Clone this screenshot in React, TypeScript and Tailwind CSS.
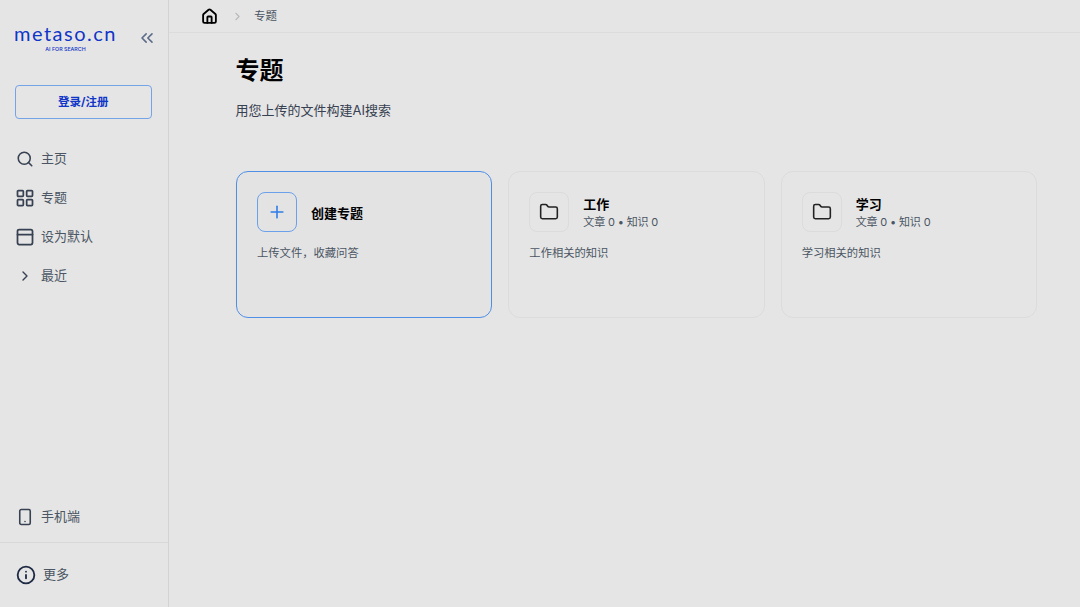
import { ChevronRight, ChevronsLeft, Folder, House, Info, LayoutGrid, PanelTop, Plus, Search, Smartphone } from "lucide-react";

const font = { fontFamily: '"Inter", "Noto Sans CJK SC", sans-serif' };

const navItems = [
  { label: "主页", icon: <Search size={18} strokeWidth={2.1} /> },
  { label: "专题", icon: <LayoutGrid size={20} strokeWidth={2.1} /> },
  { label: "设为默认", icon: <PanelTop size={20} strokeWidth={2.1} /> },
  { label: "最近", icon: <ChevronRight size={16} strokeWidth={2.1} /> },
];

function TopicCard({ title, desc }: { title: string; desc: string }) {
  return (
    <div className="h-[147px] rounded-xl border border-[#dcdcdc] px-5 pt-5">
      <div className="flex items-center gap-[14px]">
        <div className="flex size-10 items-center justify-center rounded-lg border border-[#dcdcdc] text-[#222]">
          <Folder size={20} strokeWidth={1.9} />
        </div>
        <div className="pt-[3px]">
          <div className="text-[13px] leading-[18px] font-bold text-black">{title}</div>
          <div className="text-[11px] leading-[19px] tracking-[-0.15px] text-[#4b5563]">文章 0 • 知识 0</div>
        </div>
      </div>
      <p className="mt-[13px] text-[11.3px] leading-4 text-[#4b5563]">{desc}</p>
    </div>
  );
}

export default function App() {
  return (
    <div className="flex h-[607px] w-[1080px] overflow-hidden bg-[#e5e5e5]" style={font}>
      <aside className="flex w-[169px] shrink-0 flex-col border-r border-[#d3d3d6]">
        <div className="flex items-start justify-between pt-[21px] pr-[11px] pl-[14px]">
          <div className="w-[103px] text-[#1035c8]">
            <div className="text-[20px] leading-[24px] font-normal tracking-[1.5px] whitespace-nowrap" style={{ fontFamily: '"Lato", sans-serif' }}>metaso.cn</div>
            <div className="text-center text-[5.3px] leading-[8px] font-medium">AI FOR SEARCH</div>
          </div>
          <ChevronsLeft size={20} strokeWidth={1.9} className="mt-[7px] text-[#5d6b8a]" />
        </div>
        <button type="button" className="mt-8 mr-4 ml-[14.5px] h-[34px] rounded border border-[#74a3e8] pt-0.5 text-[11.5px] font-bold text-[#1035c8]">
          登录/注册
        </button>
        <nav className="mt-5 flex flex-col">
          {navItems.map((item) => (
            <div key={item.label} className="flex h-[39px] items-center text-[13px] text-[#4b5563]">
              <span className="flex w-[41px] justify-center pl-[9px] text-[#374151]">{item.icon}</span>
              {item.label}
            </div>
          ))}
        </nav>
        <div className="mt-auto flex h-[50px] items-center text-[13px] text-[#4b5563]">
          <span className="flex w-[41px] justify-center pl-[9px] text-[#374151]">
            <Smartphone size={18} strokeWidth={2.1} />
          </span>
          手机端
        </div>
        <div className="flex h-[65px] items-center border-t border-[#d8d8da] text-[13px] text-[#4b5563]">
          <span className="flex w-[43px] justify-center pl-[9px] text-[#1f2a44]">
            <Info size={20} strokeWidth={2.2} />
          </span>
          更多
        </div>
      </aside>
      <main className="flex-1">
        <header className="flex h-[33px] items-center border-b border-[#dcdcdc] pl-8">
          <House size={17} strokeWidth={2.6} className="text-black" />
          <ChevronRight size={13} className="ml-[13px] text-[#b9b9bd]" />
          <span className="mt-px ml-[10px] text-[11.5px] text-[#4b5563]">专题</span>
        </header>
        <div className="pr-[43px] pl-[67px]">
          <h1 className="mt-[22px] -ml-[0.5px] text-2xl leading-8 font-bold text-black">专题</h1>
          <p className="mt-[14px] -ml-[0.5px] text-[13px] leading-[18px] text-[#374151]">用您上传的文件构建AI搜索</p>
          <div className="mt-[52px] grid grid-cols-3 gap-4">
            <div className="h-[147px] rounded-xl border border-[#4f8fe6] bg-[#e3e3e4] px-5 pt-5">
              <div className="flex items-center gap-[14px]">
                <div className="flex size-10 items-center justify-center rounded-lg border border-[#6ba1ea] text-[#2f7ce8]">
                  <Plus size={20} strokeWidth={1.9} />
                </div>
                <div className="pt-1 text-[13px] font-bold text-black">创建专题</div>
              </div>
              <p className="mt-[13px] text-[11.3px] leading-4 text-[#4b5563]">上传文件，收藏问答</p>
            </div>
            <TopicCard title="工作" desc="工作相关的知识" />
            <TopicCard title="学习" desc="学习相关的知识" />
          </div>
        </div>
      </main>
    </div>
  );
}
